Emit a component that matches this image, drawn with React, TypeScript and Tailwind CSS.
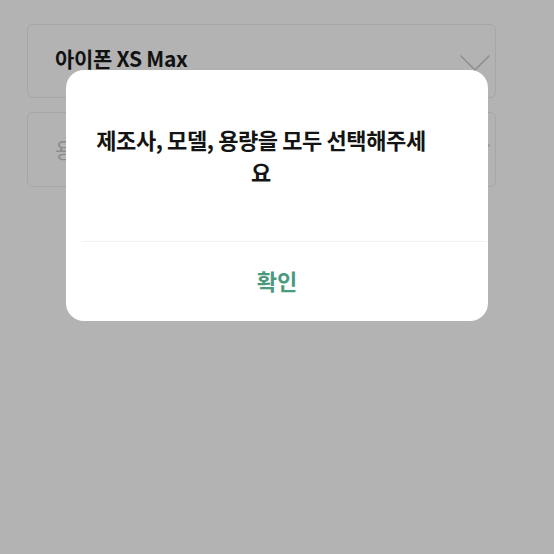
import React from "react";

const Chevron = () => (
  <svg width="32" height="18" viewBox="0 0 32 18" fill="none" className="shrink-0">
    <path d="M2 2 L16 16 L30 2" stroke="#8e8e8e" strokeWidth="1.6" strokeLinecap="round" strokeLinejoin="round" />
  </svg>
);

export default function App() {
  return (
    <div
      className="relative w-[554px] h-[554px] bg-[#b3b3b3] overflow-hidden"
      style={{ fontFamily: '"Noto Sans CJK KR", "Noto Sans", sans-serif' }}
    >
      <div className="flex flex-col gap-[14px] pt-[24px] pl-[27px] pr-[58px]">
        <div className="h-[74px] rounded-[6px] border border-[#a6a6a6] flex items-center justify-between pl-[27px] pr-[4px]">
          <span className="text-[21px] font-bold text-[#121212] tracking-[-0.3px] mt-[-4px]">아이폰 XS Max</span>
          <div className="mt-[4px]">
            <Chevron />
          </div>
        </div>
        <div className="h-[75px] rounded-[6px] border border-[#a6a6a6] flex items-center justify-between pl-[27px] pr-[4px]">
          <span className="text-[21px] text-[#8c8c8c]">용량</span>
          <div className="mt-[4px]">
            <Chevron />
          </div>
        </div>
      </div>

      <div className="absolute left-[66px] top-[70px] w-[422px] h-[251px] bg-white rounded-[18px] flex flex-col">
        <div className="h-[171px] pt-[53px] pl-[25px] pr-[57px]">
          <p className="text-center text-[22px] leading-[32px] font-bold text-[#141414] tracking-[-0.4px]">
            제조사, 모델, 용량을 모두 선택해주세요
          </p>
        </div>
        <div className="h-px bg-[#f1f1f1] ml-[16px] mr-[2px]" />
        <div className="flex-1 flex items-center justify-center pb-[2px]">
          <span className="text-[22px] font-bold text-[#4a9a80]">확인</span>
        </div>
      </div>
    </div>
  );
}
